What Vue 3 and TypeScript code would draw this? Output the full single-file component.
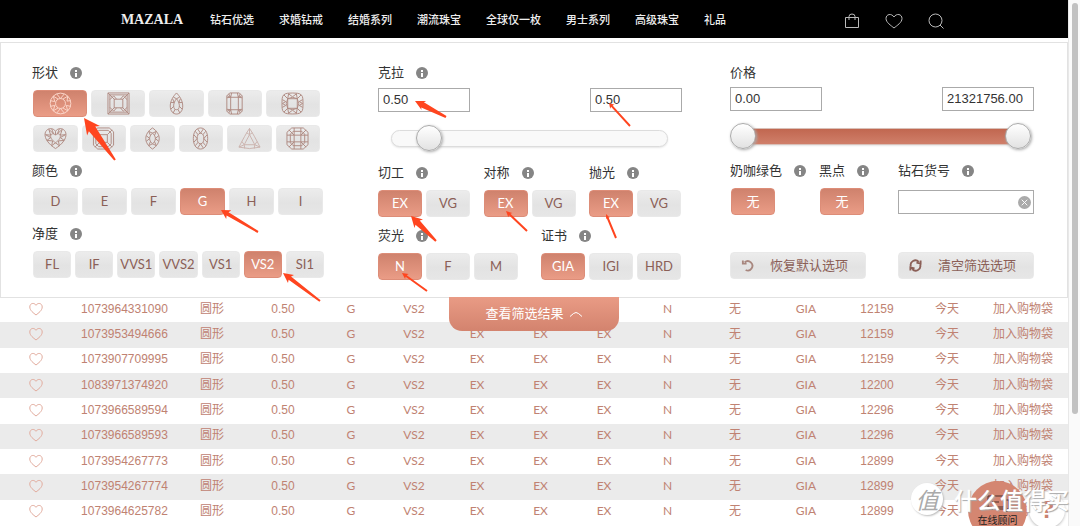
<script setup lang="ts">
import { ref } from 'vue'

interface Arrow { tip: [number, number]; tail: [number, number]; len: number; half: number; shaft: number }
interface Shape { name: string; light?: boolean; paths: string[] }

const nav = ['钻石优选', '求婚钻戒', '结婚系列', '潮流珠宝', '全球仅一枚', '男士系列', '高级珠宝', '礼品']

const shapes: Shape[] = [
  { name: '圆形', paths: [
    'M12 1.2a10.8 10.8 0 1 0 0 21.6a10.8 10.8 0 1 0 0-21.6z',
    'M12 6.8a5.2 5.2 0 1 0 0 10.4a5.2 5.2 0 1 0 0-10.4z',
    'M8 2L12 6.8L16 2M19.5 4.4L18.8 9.5L22.6 9M22.6 15L18 14L19.5 19.6M16 22L12 17.2L8 22M4.5 19.6L6 14L1.4 15M1.4 9L6 10L4.5 4.4M4.5 4.4L9.5 7.4M19.5 4.4L14.5 7.4M19.5 19.6L14.5 16.6M4.5 19.6L9.5 16.6',
  ] },
  { name: '公主方形', paths: [
    'M1 1H23V23H1z', 'M3 3H21V21H3z', 'M7.5 7.5H16.5V16.5H7.5z',
    'M1 1L8 8M23 1L16 8M23 23L16 16M1 23L8 16M3 8L7 4M3 16L7 20M21 8L17 4M21 16L17 20M7 4L10 7.5M17 4L14 7.5M7 20L10 16.5M17 20L14 16.5',
  ] },
  { name: '梨形', paths: [
    'M12 1C9 4 5.5 9 5.5 14.5C5.5 20 8.5 23 12 23S18.5 20 18.5 14.5C18.5 9 15 4 12 1z',
    'M12 7C10.3 9 9 12 9 14.5C9 17 10.3 18.5 12 18.5S15 17 15 14.5C15 12 13.7 9 12 7z',
    'M12 7L9 5.5M12 7L15 5.5M9.5 11L6 11M14.5 11L18 11M9 15L6 18M15 15L18 18M10.5 18L8.5 22M13.5 18L15.5 22M8 7L9.5 11M16 7L14.5 11',
  ].map((p) => `${p}`) },
  { name: '祖母绿形', paths: [
    'M7 1H17L20 4V20L17 23H7L4 20V4z', 'M8 5.5H16V18.5H8z',
    'M4 6L8 5.5L9 1M20 6L16 5.5L15 1M4 18L8 18.5L9 23M20 18L16 18.5L15 23M6 2L8 5.5L4.5 4M18 2L16 5.5L19.5 4M6 22L8 18.5L4.5 20M18 22L16 18.5L19.5 20',
  ] },
  { name: '垫形', paths: [
    'M7 1.3Q12 .8 17 1.3Q22.5 2 22.8 7Q23.2 12 22.8 17Q22.5 22 17 22.7Q12 23.2 7 22.7Q1.5 22 1.2 17Q.8 12 1.2 7Q1.5 2 7 1.3z',
    'M7 7H17V17H7z', 'M7 7Q4 12 7 17M17 7Q20 12 17 17M7 7Q12 4 17 7M7 17Q12 20 17 17',
    'M3 3L7 7L8 1.500M21 3L17 7L16 1.500M3 21L7 17L8 22.500M21 21L17 17L16 22.500M1.500 8L5 10L1.500 12L5 14L1.500 16M22.500 8L19 10L22.500 12L19 14L22.500 16M8 2L12 5L16 2M8 22L12 19L16 22',
  ] },
  { name: '心形', paths: [
    'M12 4.500C10 1.500 6.500 1 4 2.500C0 5 .5 10 3 14C5.500 18 9 20.500 12 22.500C15 20.500 18.500 18 21 14C23.500 10 24 5 20 2.500C17.500 1 14 1.500 12 4.500z',
    'M12 8.500C10.500 6.500 7.500 6.500 7 9C6.500 12 9.500 14.500 12 16.500C14.500 14.500 17.500 12 17 9C16.500 6.500 13.500 6.500 12 8.500z',
    'M12 4.500V8.500M8 2L10 7L5 2.500L7 8.500L1.500 8L7 11L3 14L9 14.500L8 19.500L12 16.500L16 19.500L15 14.500L21 14L17 11L22.500 8L17 8.500L19 2.500L14 7L16 2',
  ] },
  { name: '雷迪恩形', paths: [
    'M6 1H18L22.500 5V19L18 23H6L1.500 19V5z', 'M7 3.500H17L20 6.500V17.500L17 20.500H7L4 17.500V6.500z', 'M8 8H16V16H8z',
    'M3 3L8 8M21 3L16 8M3 21L8 16M21 21L16 16',
  ] },
  { name: '马眼形', paths: [
    'M12 1C7.500 4 5 8 5 12S7.500 20 12 23C16.500 20 19 16 19 12S16.500 4 12 1z',
    'M12 6.500C10 8 9 10 9 12S10 16 12 17.500C14 16 15 14 15 12S14 8 12 6.500z',
    'M12 6.500L8 4.500M12 6.500L16 4.500M12 17.500L8 19.500M12 17.500L16 19.500M5.500 9L9 12L5.500 15M18.500 9L15 12L18.500 15M8 4.500L10 9M16 4.500L14 9M8 19.500L10 15M16 19.500L14 15',
  ] },
  { name: '椭圆形', paths: [
    'M12 1C7 1 4.500 6 4.500 12S7 23 12 23S19.500 18 19.500 12S17 1 12 1z',
    'M12 6.500C9.500 6.500 8.500 9 8.500 12S9.500 17.500 12 17.500S15.500 15 15.500 12S14.500 6.500 12 6.500z',
    'M9 2L12 6.500L15 2M9 22L12 17.500L15 22M5 8L8.500 12L5 16M19 8L15.500 12L19 16M6.500 4.500L9.500 8M17.500 4.500L14.500 8M6.500 19.500L9.500 16M17.500 19.500L14.500 16',
  ] },
  { name: '三角形', light: true, paths: [
    'M12 1.500Q16.500 8 23 21Q12 24 1 21Q7.500 8 12 1.500z', 'M12 8L17.500 18.500H6.500z',
    'M12 1.500V8L9 6M12 8L15 6M1 21L6.500 18.500L4 15M6.500 18.500L7 22.500M23 21L17.500 18.500L20 15M17.500 18.500L17 22.500',
  ] },
  { name: '阿斯切形', paths: [
    'M6 1H18L23 5.500V18.500L18 23H6L1 18.500V5.500z', 'M7.500 4.500H16.500L19.500 7.500V16.500L16.500 19.500H7.500L4.500 16.500V7.500z', 'M8.500 8.500H15.500V15.500H8.500z',
    'M3 3L8.500 8.500M21 3L15.500 8.500M3 21L8.500 15.500M21 21L15.500 15.500M8.500 1V8.500M15.500 1V8.500M8.500 15.500V23M15.500 15.500V23M1 8.500H8.500M1 15.500H8.500M15.500 8.500H23M15.500 15.500H23',
  ] },
]

const colors = ['D', 'E', 'F', 'G', 'H', 'I']
const clarities = ['FL', 'IF', 'VVS1', 'VVS2', 'VS1', 'VS2', 'SI1']
const finishes = [{ label: '切工', key: 'cut' }, { label: '对称', key: 'symmetry' }, { label: '抛光', key: 'polish' }]
const reports = [
  { label: '荧光', key: 'fluor', options: ['N', 'F', 'M'] },
  { label: '证书', key: 'cert', options: ['GIA', 'IGI', 'HRD'] },
]
const picked = ref<Record<string, string>>({
  shape: '圆形', color: 'G', clarity: 'VS2', cut: 'EX', symmetry: 'EX', polish: 'EX', fluor: 'N', cert: 'GIA',
})
const milky = ref(true)
const spots = ref(true)
const caratMin = ref('0.50')
const caratMax = ref('0.50')
const priceMin = ref('0.00')
const priceMax = ref('21321756.00')
const stock = ref('')
const caratPos = ref(10)
const low = ref(0)
const high = ref(100)

const columns = [71, 107, 68, 74, 62, 64, 62, 65, 62, 65, 70, 72, 70, 70, 86]
const total = columns.reduce((a, b) => a + b, 0)
const diamonds = [
  ['1073964331090', '12159'], ['1073953494666', '12159'], ['1073907709995', '12159'],
  ['1083971374920', '12200'], ['1073966589594', '12296'], ['1073966589593', '12296'],
  ['1073954267773', '12899'], ['1073954267774', '12899'], ['1073964625782', '12899'],
]

const arrows: Arrow[] = [
  { tip: [84, 118], tail: [115, 160], len: 16, half: 8, shaft: 4 },
  { tip: [415, 101], tail: [446, 117], len: 10, half: 5, shaft: 3 },
  { tip: [609, 103], tail: [630, 126], len: 5, half: 3, shaft: 1 },
  { tip: [221, 210], tail: [258, 232], len: 9, half: 5, shaft: 2 },
  { tip: [283, 273], tail: [320, 301], len: 10, half: 5, shaft: 2 },
  { tip: [411, 216], tail: [436, 241], len: 11, half: 6, shaft: 3 },
  { tip: [506, 211], tail: [527, 231], len: 6, half: 3, shaft: 1 },
  { tip: [606, 214], tail: [616, 238], len: 5, half: 2, shaft: 1 },
  { tip: [402, 273], tail: [427, 291], len: 6, half: 3, shaft: 1 },
]
function arrowPoints(a: Arrow): string {
  const dx = a.tail[0] - a.tip[0]
  const dy = a.tail[1] - a.tip[1]
  const d = Math.hypot(dx, dy)
  const at = (along: number, side: number) =>
    `${(a.tip[0] + (dx * along - dy * side) / d).toFixed(1)},${(a.tip[1] + (dy * along + dx * side) / d).toFixed(1)}`
  return [at(0, 0), at(a.len, a.half), at(a.len * 0.85, a.shaft), at(d, 1), at(d, -1), at(a.len * 0.85, -a.shaft), at(a.len, -a.half)].join(' ')
}
</script>

<template>
  <div class="window">
    <div class="page">
      <header class="top">
        <a class="logo" href="#">MAZALA</a>
        <nav class="links"><a v-for="n in nav" :key="n" href="#">{{ n }}</a></nav>
        <div class="tools">
          <button type="button" aria-label="购物袋"><svg viewBox="0 0 18 18"><path d="M2.500 6.500H15.500V16.500H2.500zM6 9V5.500Q6 3 9 3T12 5.500V9" /></svg></button>
          <button type="button" aria-label="收藏"><svg viewBox="0 0 18 18"><path d="M9 17C6 14.500 1 11.500 1 7.500C1 3 6.500 2 9 6C11.500 2 17 3 17 7.500C17 11.500 12 14.500 9 17z" /></svg></button>
          <button type="button" aria-label="搜索"><svg viewBox="0 0 18 18"><circle cx="8.500" cy="9.500" r="6.500" /><path d="M13 14L16.500 17.500" /></svg></button>
        </div>
      </header>

      <main>
        <section class="panel" aria-label="筛选">
          <div class="col left">
            <div class="title"><span>形状</span><button class="info" type="button" aria-label="形状说明"></button></div>
            <div class="grid five">
              <button v-for="s in shapes.slice(0, 5)" :key="s.name" type="button" class="opt" :class="{ on: picked.shape === s.name }" :aria-label="s.name" :aria-pressed="picked.shape === s.name" @click="picked.shape = s.name">
                <svg class="gem" viewBox="0 0 24 24"><path v-for="p in s.paths" :key="p" :d="p" /></svg>
              </button>
            </div>
            <div class="grid six">
              <button v-for="s in shapes.slice(5)" :key="s.name" type="button" class="opt" :class="{ on: picked.shape === s.name }" :aria-label="s.name" :aria-pressed="picked.shape === s.name" @click="picked.shape = s.name">
                <svg class="gem" :class="{ pale: s.light }" viewBox="0 0 24 24"><path v-for="p in s.paths" :key="p" :d="p" /></svg>
              </button>
            </div>
            <div class="title"><span>颜色</span><button class="info" type="button" aria-label="颜色说明"></button></div>
            <div class="grid colors">
              <button v-for="c in colors" :key="c" type="button" class="opt" :class="{ on: picked.color === c }" :aria-pressed="picked.color === c" @click="picked.color = c">{{ c }}</button>
            </div>
            <div class="title"><span>净度</span><button class="info" type="button" aria-label="净度说明"></button></div>
            <div class="grid clarity">
              <button v-for="c in clarities" :key="c" type="button" class="opt" :class="{ on: picked.clarity === c }" :aria-pressed="picked.clarity === c" @click="picked.clarity = c">{{ c }}</button>
            </div>
          </div>

          <div class="col middle">
            <div class="title"><label for="carat-min">克拉</label><button class="info" type="button" aria-label="克拉说明"></button></div>
            <div class="pair">
              <input id="carat-min" v-model="caratMin" class="box" type="text">
              <input v-model="caratMax" class="box" type="text" aria-label="最大克拉">
            </div>
            <div class="slider carat">
              <span class="track"></span>
              <input v-model.number="caratPos" type="range" min="0" max="100" aria-label="克拉范围">
            </div>
            <div class="groups">
              <div v-for="f in finishes" :key="f.key" class="group">
                <div class="title"><span>{{ f.label }}</span><button class="info" type="button" :aria-label="f.label + '说明'"></button></div>
                <div class="row">
                  <button v-for="o in ['EX', 'VG']" :key="o" type="button" class="opt fixed" :class="{ on: picked[f.key] === o }" :aria-pressed="picked[f.key] === o" @click="picked[f.key] = o">{{ o }}</button>
                </div>
              </div>
            </div>
            <div class="groups">
              <div v-for="r in reports" :key="r.key" class="group">
                <div class="title"><span>{{ r.label }}</span><button class="info" type="button" :aria-label="r.label + '说明'"></button></div>
                <div class="row">
                  <button v-for="o in r.options" :key="o" type="button" class="opt fixed" :class="{ on: picked[r.key] === o }" :aria-pressed="picked[r.key] === o" @click="picked[r.key] = o">{{ o }}</button>
                </div>
              </div>
            </div>
          </div>

          <div class="col right">
            <div class="title"><label for="price-min">价格</label></div>
            <div class="pair">
              <input id="price-min" v-model="priceMin" class="box" type="text">
              <input v-model="priceMax" class="box" type="text" aria-label="最高价格">
            </div>
            <div class="slider price">
              <span class="track filled"></span>
              <input v-model.number="low" type="range" min="0" max="100" aria-label="最低价格滑块">
              <input v-model.number="high" type="range" min="0" max="100" aria-label="最高价格滑块">
            </div>
            <div class="extras">
              <div class="group">
                <div class="title"><span>奶咖绿色</span><button class="info" type="button" aria-label="奶咖绿色说明"></button></div>
                <button type="button" class="opt fixed" :class="{ on: milky }" :aria-pressed="milky" @click="milky = !milky">无</button>
              </div>
              <div class="group">
                <div class="title"><span>黑点</span><button class="info" type="button" aria-label="黑点说明"></button></div>
                <button type="button" class="opt fixed" :class="{ on: spots }" :aria-pressed="spots" @click="spots = !spots">无</button>
              </div>
              <div class="group stock">
                <div class="title"><label for="stock">钻石货号</label><button class="info" type="button" aria-label="钻石货号说明"></button></div>
                <div class="field">
                  <input id="stock" v-model="stock" type="text">
                  <button type="button" aria-label="清除" @click="stock = ''"><svg viewBox="0 0 14 14"><circle cx="7" cy="7" r="7" /><path d="M4 4L10 10M10 4L4 10" /></svg></button>
                </div>
              </div>
            </div>
            <div class="actions">
              <button type="button" class="opt wide"><svg viewBox="0 0 14 14"><path d="M4 3.500A5 5 0 1 1 5 11.800M2 1.500V5H6" /></svg><span>恢复默认选项</span></button>
              <button type="button" class="opt wide"><svg class="dark" viewBox="0 0 14 14"><path d="M2 8A5 5 0 0 1 10.500 3.200M12 6A5 5 0 0 1 3.500 10.800M8 4L12.500 5V1.500M6 10L1.500 9V12.500" /></svg><span>清空筛选选项</span></button>
            </div>
          </div>

          <button type="button" class="tab">查看筛选结果<svg viewBox="0 0 14 8"><path d="M1 6.500L4.500 3.500Q7 1.500 9.500 3.500L13 6.500" /></svg></button>
        </section>

        <table class="results" aria-label="钻石列表">
          <colgroup><col v-for="(w, i) in columns" :key="i" :style="{ width: (w / total) * 100 + '%' }"></colgroup>
          <tbody>
            <tr v-for="d in diamonds" :key="d[0]">
              <td><button type="button" class="like" aria-label="收藏"><svg viewBox="0 0 14 14"><path d="M7 13C4.500 11 .8 8.500 .8 5C.8 1 5.300.3 7 3.300C8.700.3 13.200 1 13.200 5C13.200 8.500 9.500 11 7 13z" /></svg></button></td>
              <td>{{ d[0] }}</td><td>圆形</td><td>0.50</td>
              <td class="code">G</td><td class="code">VS2</td><td class="code">EX</td><td class="code">EX</td><td class="code">EX</td><td class="code">N</td>
              <td>无</td><td class="code">GIA</td><td>{{ d[1] }}</td><td>今天</td><td class="buy"><a href="#">加入购物袋</a></td>
            </tr>
          </tbody>
        </table>
      </main>
    </div>
    <div class="scrollbar" aria-hidden="true"><span></span></div>

    <button type="button" class="chat"><svg viewBox="0 0 24 18"><path d="M2 1H18V12H9L6 15V12H2z" /><path d="M20 5H23V14H21V17L18 14H11M6 7H13" /></svg><span>在线顾问</span></button>
    <button type="button" class="help" aria-label="帮助">?</button>
    <svg class="arrows" viewBox="0 0 1080 526" aria-hidden="true"><polygon v-for="(a, i) in arrows" :key="i" :points="arrowPoints(a)" /></svg>
    <div class="mark"><span class="seal">值</span><span class="words">什么值得买</span></div>
  </div>
</template>

<style>
body { margin: 0; overflow: hidden; }
</style>

<style scoped>
.window {
  position: relative;
  display: grid;
  grid-template-columns: minmax(0, 1fr) 12px;
  height: 100vh;
  overflow: hidden;
  background: #fff;
  color: #333;
  font: 13px/20px "Liberation Sans", "Noto Sans CJK SC", sans-serif;
}
.window * { box-sizing: border-box; }
button, input { margin: 0; padding: 0; font: inherit; color: inherit; }
button { border: 0; background: none; cursor: pointer; }
a { color: inherit; text-decoration: none; }
svg { display: block; fill: none; }

.top {
  display: flex;
  align-items: center;
  justify-content: center;
  height: 38px;
  padding: 2px 2px 0 0;
  background: #000;
  color: #eee;
}
.logo { font: bold 14px/20px "Liberation Serif", serif; }
.links { display: flex; gap: 25px; margin-left: 27px; font-size: 11px; font-weight: 500; }
.tools { display: flex; gap: 24px; margin-left: 117px; }
.tools svg { width: 18px; height: 18px; stroke: #bbb; stroke-width: 1; }

.panel {
  position: relative;
  display: grid;
  grid-template-columns: 346fr 352fr 337fr;
  margin-top: 4px;
  padding: 20px 0 17px 31px;
  border: 1px solid #e2e2e2;
  background: #fff;
}
.title { display: flex; align-items: center; gap: 12px; height: 20px; white-space: nowrap; }
.info {
  display: grid;
  place-items: center;
  align-content: center;
  gap: 1px;
  width: 12px;
  height: 12px;
  border-radius: 50%;
  background: #858585;
}
.info::before { content: ""; width: 2px; height: 2px; background: #fff; }
.info::after { content: ""; width: 2px; height: 4px; background: #fff; }

.opt {
  display: flex;
  align-items: center;
  justify-content: center;
  height: 27px;
  padding: 0 0 1px;
  border: 1px solid #e9e9e9;
  border-radius: 4px;
  background: linear-gradient(#ececec, #e3e3e3 55%, #e6e6e6);
  color: #8b5f57;
  font: 13px/20px Lato, "Noto Sans CJK SC", sans-serif;
}
.opt.on { border-color: #dd8d78; background: linear-gradient(#cf826d, #ea9c86); color: #fff; }
.fixed { width: 44px; }
.gem { width: 23px; height: 23px; stroke: #b08b83; stroke-width: 1; }
.gem.pale { stroke: #cbb3ad; }
.on .gem { stroke: #fbd6ca; }

.grid { display: grid; margin: 7px 0 0 1px; gap: 4px; }
.five { grid-template-columns: repeat(5, 1fr); width: 287px; }
.six { grid-template-columns: repeat(6, 1fr); width: 287px; margin-top: 8px; margin-bottom: 9px; }
.colors { grid-template-columns: repeat(6, 1fr); width: 290px; margin-bottom: 9px; }
.clarity { grid-template-columns: repeat(7, 1fr); width: 291px; }

.pair { display: flex; justify-content: space-between; width: 304px; margin-top: 5px; }
.box {
  width: 92px;
  height: 24px;
  padding: 0 4px 1px;
  border: 1px solid #aaa;
  background: #fff;
}
.right .pair { margin-top: 4px; }
.slider { position: relative; display: flex; align-items: center; height: 26px; margin: 13px 0 12px; }
.carat { width: 277px; margin-left: 13px; }
.price { width: 301px; margin-top: 12px; }
.track {
  flex: 1;
  height: 17px;
  border: 1px solid #dcdcdc;
  border-radius: 9px;
  background: #f9f9f9;
  box-shadow: 0 1px 2px #e6e6e6;
}
.filled { margin: 0 8px; border-color: #d9c0b8; background: linear-gradient(#c16750, #d07f6a); }
.slider input {
  position: absolute;
  inset: 0;
  width: 100%;
  height: 26px;
  appearance: none;
  background: transparent;
  pointer-events: none;
}
.slider input::-webkit-slider-thumb {
  appearance: none;
  width: 26px;
  height: 26px;
  border: 1px solid #aaa;
  border-radius: 50%;
  background: linear-gradient(#fff, #e2e2e2);
  box-shadow: 1px 1px 3px #aaa;
  pointer-events: auto;
}
.groups { display: flex; justify-content: space-between; width: 303px; }
.groups + .groups { margin-top: 9px; }
.row { display: flex; gap: 4px; margin-top: 7px; }

.extras { display: grid; grid-template-columns: 89px 79px 136px; }
.extras .group > .opt { margin: 7px 0 0 1px; }
.field { display: flex; align-items: center; height: 24px; margin-top: 9px; border: 1px solid #aaa; }
.field input { flex: 1; min-width: 0; height: 100%; padding: 0 4px; border: 0; outline: 0; background: none; }
.field button { margin-right: 2px; }
.field svg { width: 13px; height: 13px; }
.field circle { fill: #aaa; }
.field path { stroke: #fff; stroke-width: 1; }
.actions { display: flex; gap: 32px; margin-top: 37px; }
.wide { justify-content: flex-start; gap: 16px; width: 136px; padding-left: 10px; }
.wide svg { width: 13px; height: 13px; stroke: #a8877f; stroke-width: 2; }
.wide svg.dark { stroke: #8b5f57; }

.tab {
  position: absolute;
  top: 100%;
  left: 50%;
  display: flex;
  align-items: center;
  justify-content: center;
  gap: 5px;
  width: 170px;
  height: 34px;
  transform: translateX(-50%);
  border-radius: 0 0 13px 13px;
  background: linear-gradient(#e99b85, #d3836e);
  color: #fff;
}
.tab svg { width: 14px; height: 8px; stroke: #fff; stroke-width: 1; }

.results {
  width: 100%;
  height: 228px;
  margin-top: -1px;
  table-layout: fixed;
  border-collapse: collapse;
  color: #c08272;
  font-size: 12px;
  line-height: 16px;
}
.results tr:nth-child(even) { background: #ebebeb; }
.results td { padding: 0 0 2px; text-align: center; white-space: nowrap; }
.results .code { font-family: Lato, sans-serif; }
.results .buy { padding-right: 4px; }
.like { display: block; margin: 0 auto; }
.like svg { width: 14px; height: 14px; stroke: #e2ab9d; stroke-width: 1; }

.scrollbar { padding: 3px 2px 0 3px; border-left: 1px solid #e8e8e8; background: #fafafa; }
.scrollbar span { display: block; height: 411px; border-radius: 4px; background: #c1c1c1; }

.chat {
  position: absolute;
  right: 53px;
  bottom: -14px;
  width: 59px;
  height: 59px;
  padding-top: 3px;
  border-radius: 50%;
  background: #d48671;
  color: #222;
  font-size: 10px;
  line-height: 16px;
  text-align: center;
}
.chat span { display: block; }
.chat svg { width: 24px; height: 18px; margin: 0 auto; stroke: #4a2f29; stroke-width: 1; }
.help {
  position: absolute;
  right: 15px;
  bottom: -2px;
  width: 36px;
  height: 36px;
  border-radius: 50%;
  background: #fff;
  box-shadow: 0 1px 3px #bbb;
  color: #c98270;
  font-size: 24px;
  font-weight: bold;
  line-height: 36px;
}
.arrows { position: absolute; top: 0; left: 0; width: 1080px; height: 526px; fill: #ff451f; pointer-events: none; }
.mark {
  position: absolute;
  right: 11px;
  bottom: 11px;
  display: flex;
  align-items: center;
  gap: 11px;
  font: 23px/32px "Noto Sans CJK SC", sans-serif;
  pointer-events: none;
}
.seal {
  width: 32px;
  height: 32px;
  border-radius: 50%;
  background: #fff;
  box-shadow: 1px 1px 2px #bbb;
  color: #aaa;
  font-style: italic;
  text-align: center;
}
.words { color: #fff; font-weight: 500; text-shadow: 1px 1px 1px #aaa; }
</style>
